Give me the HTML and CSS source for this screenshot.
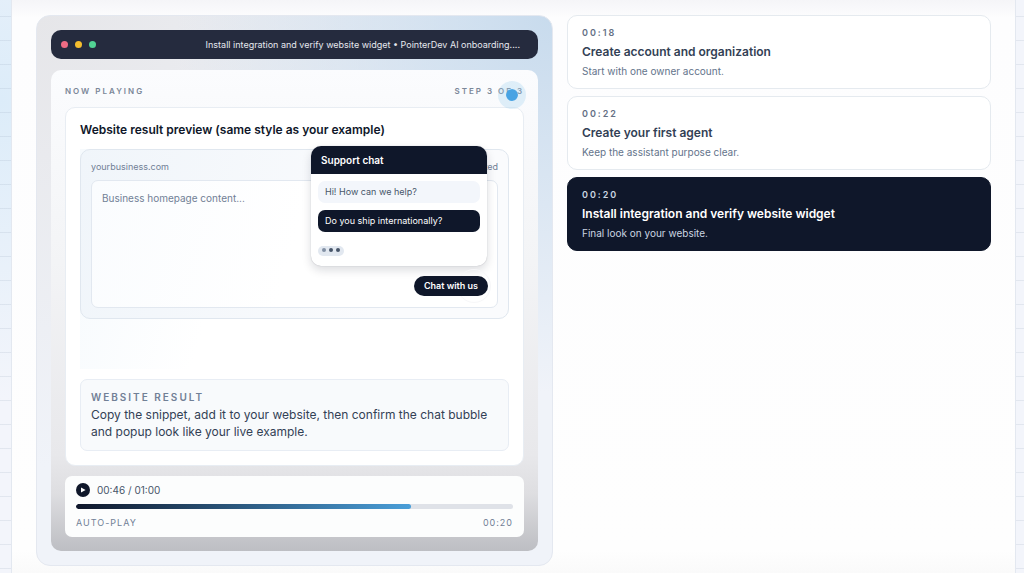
FILE: index.html
```html
<!DOCTYPE html>
<html lang="en">
<head>
    <meta charset="UTF-8">
    <meta name="viewport" content="width=device-width, initial-scale=1.0">
    <title>PointerDev AI onboarding</title>
    <link rel="stylesheet" href="styles.css">
</head>
<body>
    <main class="panel">
        <section class="player">
            <header class="titlebar">
                <div class="lights">
                    <span class="light red"></span>
                    <span class="light yellow"></span>
                    <span class="light green"></span>
                </div>
                <p class="titlebar-text">Install integration and verify website widget • PointerDev AI onboarding....</p>
            </header>

            <div class="stage">
                <div class="stage-head">
                    <span>Now playing</span>
                    <span>Step 3 of 3</span>
                    <span class="pointer"></span>
                </div>

                <div class="scene">
                    <h2>Website result preview (same style as your example)</h2>
                    <div class="scene-body">
                        <div class="browser">
                            <div class="browser-bar">
                                <span>yourbusiness.com</span>
                                <span>Connected</span>
                            </div>
                            <div class="browser-page">Business homepage content...</div>

                            <div class="chat">
                                <div class="chat-head">Support chat</div>
                                <div class="chat-body">
                                    <p class="message">Hi! How can we help?</p>
                                    <p class="message mine">Do you ship internationally?</p>
                                    <div class="typing"><span></span><span></span><span></span></div>
                                </div>
                            </div>
                            <span class="ripple"></span>
                            <button type="button" class="chat-button">Chat with us</button>
                        </div>
                    </div>
                    <div class="caption">
                        <h3>Website result</h3>
                        <p>Copy the snippet, add it to your website, then confirm the chat bubble and popup look like your live example.</p>
                    </div>
                </div>

                <div class="controls">
                    <div class="controls-top">
                        <button type="button" class="play" aria-label="Play">
                            <svg width="14" height="14" viewBox="0 0 14 14"><path d="M5 4.6 9.6 7 5 9.4z" fill="#fff"/></svg>
                        </button>
                        <span>00:46 / 01:00</span>
                    </div>
                    <progress value="46" max="60" aria-label="Progress"></progress>
                    <div class="controls-bottom">
                        <span class="autoplay">Auto-play</span>
                        <span>00:20</span>
                    </div>
                </div>
            </div>
        </section>

        <nav class="steps">
            <button type="button" class="step">
                <span class="step-time">00:18</span>
                <span class="step-title">Create account and organization</span>
                <span class="step-text">Start with one owner account.</span>
            </button>
            <button type="button" class="step">
                <span class="step-time">00:22</span>
                <span class="step-title">Create your first agent</span>
                <span class="step-text">Keep the assistant purpose clear.</span>
            </button>
            <button type="button" class="step active">
                <span class="step-time">00:20</span>
                <span class="step-title">Install integration and verify website widget</span>
                <span class="step-text">Final look on your website.</span>
            </button>
        </nav>
    </main>
</body>
</html>
```

FILE: styles.css
```css
* {
    box-sizing: border-box;
}

body {
    margin: 0;
    padding: 0 8px 0 11px;
    font-family: Inter, "Liberation Sans", sans-serif;
    color: #0f172a;
    background:
        repeating-linear-gradient(rgba(148, 163, 184, 0) 0 16px, rgba(148, 163, 184, 0.18) 16px 17px, rgba(148, 163, 184, 0) 17px 24px),
        radial-gradient(circle at 0 100px, #dcecf9, rgba(220, 236, 249, 0) 300px),
        #f3f5fb;
}

h2, h3, p {
    margin: 0;
}

button {
    font-family: inherit;
    border: none;
    padding: 0;
    cursor: pointer;
}

.panel {
    display: grid;
    grid-template-columns: 517fr 424fr;
    gap: 14px;
    align-items: start;
    min-height: 100vh;
    padding: 15px 24px 7px;
    border: solid #e3e8f0;
    border-width: 0 1px;
    background: linear-gradient(#f5f5f8, #fdfdfe 18px, #fefefe 550px, #fafafa 573px);
}

.player {
    padding: 14px;
    border: 1px solid #e4e8f0;
    border-radius: 14px;
    background:
        radial-gradient(circle at 100% 0, #c8dbed, rgba(200, 219, 237, 0) 50%),
        radial-gradient(circle at 0 0, #e6e6e9, rgba(230, 230, 233, 0) 60%),
        #f0f3f9;
}

.titlebar {
    display: flex;
    align-items: center;
    justify-content: space-between;
    height: 29px;
    margin-bottom: 11px;
    padding: 0 18px 0 10px;
    border-radius: 10px;
    background: #252b3e;
}

.lights {
    display: flex;
    gap: 7px;
}

.light {
    width: 7px;
    height: 7px;
    border-radius: 50%;
}

.red {
    background: #ee6c84;
}

.yellow {
    background: #f5bd2e;
}

.green {
    background: #52d394;
}

.titlebar-text {
    font-size: 9px;
    line-height: 14px;
    color: #e5e8ee;
    white-space: nowrap;
}

.stage {
    padding: 14px;
    border-radius: 10px;
    background: linear-gradient(#fbfcfe, #f3f4f6 40%, #e8e8eb 80%, #dedee1 88%, #bdbec3);
}

.stage-head {
    position: relative;
    display: flex;
    justify-content: space-between;
    margin-bottom: 9px;
    font-size: 8px;
    font-weight: 600;
    line-height: 14px;
    letter-spacing: 2px;
    text-transform: uppercase;
    color: #7b8798;
}

/* fake mouse pointer of the demo */
.pointer {
    position: absolute;
    top: -3px;
    right: -2px;
    width: 28px;
    height: 28px;
    border: 8px solid rgba(160, 210, 240, 0.3);
    border-radius: 50%;
    background: #48a3e3;
    background-clip: padding-box;
}

.scene {
    padding: 14px;
    border: 1px solid #e8edf3;
    border-radius: 10px;
    background: #fff;
}

.scene h2 {
    margin-bottom: 11px;
    font-size: 12px;
    font-weight: 600;
    line-height: 16px;
}

.scene-body {
    height: 220px;
    margin-bottom: 10px;
    background: linear-gradient(105deg, #f6fafd, #fff 35%);
}

.browser {
    position: relative;
    padding: 10px;
    border: 1px solid #e0e7ef;
    border-radius: 10px;
    background: linear-gradient(100deg, #f0f5fa, #fafbfd 70%);
}

.browser-bar {
    display: flex;
    justify-content: space-between;
    margin-bottom: 6px;
    font-size: 9px;
    line-height: 14px;
    color: #718096;
}

.browser-page {
    height: 128px;
    padding: 10px;
    border: 1px solid #e2e8f0;
    border-radius: 7px;
    background: linear-gradient(105deg, #fafcfe, #fff 50%);
    font-size: 10px;
    line-height: 14px;
    color: #718096;
}

.chat {
    position: absolute;
    top: -4px;
    right: 21px;
    width: 176px;
    border-radius: 10px;
    background: #fff;
    box-shadow: 0 4px 10px rgba(15, 23, 42, 0.15), 0 0 1px rgba(15, 23, 42, 0.3);
    overflow: hidden;
}

.chat-head {
    padding: 7px 10px;
    background: #0f172a;
    color: #fff;
    font-size: 10px;
    font-weight: 600;
    line-height: 14px;
}

.chat-body {
    padding: 7px 7px 10px;
}

.message {
    margin-bottom: 7px;
    padding: 4px 7px;
    border-radius: 7px;
    background: #f3f6fb;
    color: #475569;
    font-size: 9px;
    line-height: 14px;
}

.mine {
    background: #0f172a;
    color: #fff;
}

.typing {
    display: flex;
    align-items: center;
    justify-content: center;
    gap: 3px;
    width: 26px;
    height: 10px;
    margin-top: 14px;
    padding-bottom: 3px;
    border-radius: 5px;
    background: #e2e8f0;
}

.typing span {
    width: 4px;
    height: 4px;
    border-radius: 50%;
    background: #475569;
}

.typing span:first-child {
    background: #8290a4;
}

.ripple {
    position: absolute;
    right: 17px;
    bottom: 15px;
    width: 34px;
    height: 34px;
    border: 1px solid #f7f7f9;
    border-radius: 50%;
}

.chat-button {
    position: absolute;
    right: 20px;
    bottom: 22px;
    padding: 3px 10px;
    border-radius: 10px;
    background: #0f172a;
    color: #fff;
    font-size: 9px;
    font-weight: 600;
    line-height: 14px;
}

.caption {
    padding: 10px;
    border: 1px solid #e8edf4;
    border-radius: 7px;
    background: #f8fafc;
}

.caption h3 {
    margin-bottom: 2px;
    font-size: 10px;
    font-weight: 600;
    line-height: 14px;
    letter-spacing: 2px;
    text-transform: uppercase;
    color: #718096;
}

.caption p {
    font-size: 12px;
    line-height: 17px;
    color: #334155;
}

.controls {
    margin-top: 10px;
    padding: 7px 11px;
    border-radius: 7px;
    background: #fcfdfd;
}

.controls-top {
    display: flex;
    align-items: center;
    gap: 7px;
    font-size: 10px;
    line-height: 14px;
    color: #475569;
}

.play {
    display: flex;
    width: 14px;
    height: 14px;
    border-radius: 50%;
    background: #0f172a;
}

progress {
    display: block;
    width: 100%;
    height: 5px;
    margin: 7px 0;
    border: none;
    border-radius: 3px;
    background: #dfe2e8;
    overflow: hidden;
    appearance: none;
}

progress::-webkit-progress-bar {
    background: #dfe2e8;
}

progress::-webkit-progress-value {
    border-radius: 3px;
    background: linear-gradient(90deg, #0f172a, #4a9fd9);
}

.controls-bottom {
    display: flex;
    justify-content: space-between;
    font-size: 9px;
    line-height: 14px;
    letter-spacing: 1px;
    color: #718096;
}

.autoplay {
    text-transform: uppercase;
}

.steps {
    display: grid;
    gap: 7px;
}

.step {
    display: flex;
    flex-direction: column;
    padding: 10px 14px;
    border: 1px solid #e5eaef;
    border-radius: 10px;
    background: #fff;
    text-align: left;
}

.step-time {
    margin-bottom: 4px;
    font-size: 9px;
    font-weight: 600;
    line-height: 14px;
    letter-spacing: 2px;
    color: #647084;
}

.step-title {
    margin-bottom: 4px;
    font-size: 12px;
    font-weight: 600;
    line-height: 16px;
    color: #334155;
}

.step-text {
    font-size: 10px;
    line-height: 14px;
    color: #64748b;
}

.active {
    border-color: #0f172a;
    background: #0f172a;
}

.active .step-time,
.active .step-text {
    color: #cbd5e1;
}

.active .step-title {
    color: #fff;
}
```
